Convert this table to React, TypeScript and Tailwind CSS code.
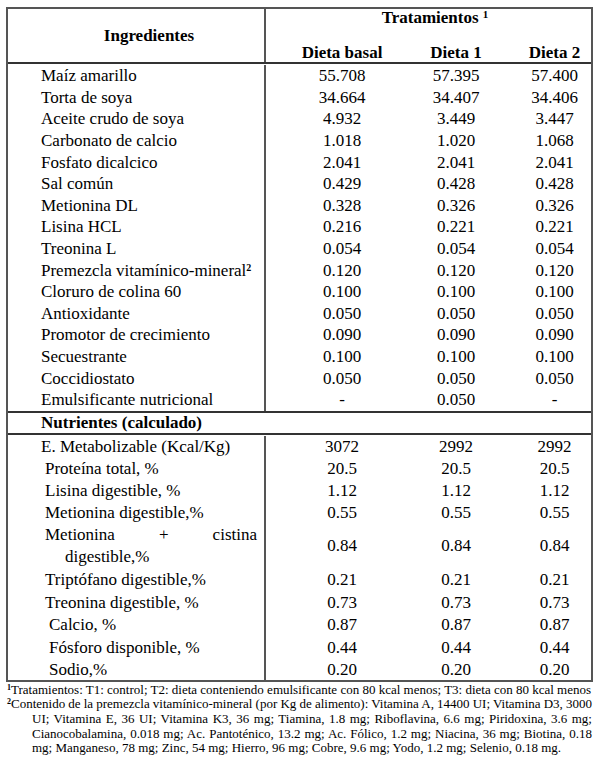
import React from "react";

type Row = { name: React.ReactNode; v: [string, string, string]; pl?: string; h?: string };

const ingredients: Row[] = [
  { name: "Maíz amarillo", v: ["55.708", "57.395", "57.400"] },
  { name: "Torta de soya", v: ["34.664", "34.407", "34.406"] },
  { name: "Aceite crudo de soya", v: ["4.932", "3.449", "3.447"] },
  { name: "Carbonato de calcio", v: ["1.018", "1.020", "1.068"] },
  { name: "Fosfato dicalcico", v: ["2.041", "2.041", "2.041"] },
  { name: "Sal común", v: ["0.429", "0.428", "0.428"] },
  { name: "Metionina DL", v: ["0.328", "0.326", "0.326"] },
  { name: "Lisina HCL", v: ["0.216", "0.221", "0.221"] },
  { name: "Treonina L", v: ["0.054", "0.054", "0.054"] },
  {
    name: (
      <>
        Premezcla vitamínico-mineral<sup className="font-bold text-[10px]">2</sup>
      </>
    ),
    v: ["0.120", "0.120", "0.120"],
  },
  { name: "Cloruro de colina 60", v: ["0.100", "0.100", "0.100"] },
  { name: "Antioxidante", v: ["0.050", "0.050", "0.050"] },
  { name: "Promotor de crecimiento", v: ["0.090", "0.090", "0.090"] },
  { name: "Secuestrante", v: ["0.100", "0.100", "0.100"] },
  { name: "Coccidiostato", v: ["0.050", "0.050", "0.050"] },
  { name: "Emulsificante nutricional", v: ["-", "0.050", "-"] },
];

const nutrients: Row[] = [
  { name: "E. Metabolizable (Kcal/Kg)", v: ["3072", "2992", "2992"], pl: "pl-[33px]" },
  { name: "Proteína total, %", v: ["20.5", "20.5", "20.5"], pl: "pl-[37px]" },
  { name: "Lisina digestible, %", v: ["1.12", "1.12", "1.12"], pl: "pl-[37px]" },
  { name: "Metionina digestible,%", v: ["0.55", "0.55", "0.55"], pl: "pl-[37px]" },
];

const nutrients2: Row[] = [
  { name: "Triptófano digestible,%", v: ["0.21", "0.21", "0.21"], pl: "pl-[37px]", h: "h-[23px]" },
  { name: "Treonina digestible, %", v: ["0.73", "0.73", "0.73"], pl: "pl-[37px]", h: "h-[23px]" },
  { name: "Calcio, %", v: ["0.87", "0.87", "0.87"], pl: "pl-[41px]", h: "h-[22px]" },
  { name: "Fósforo disponible, %", v: ["0.44", "0.44", "0.44"], pl: "pl-[41px]", h: "h-[23px]" },
  { name: "Sodio,%", v: ["0.20", "0.20", "0.20"], pl: "pl-[41px]", h: "h-[21px]" },
];

function Nums({ v }: { v: [string, string, string] }) {
  return (
    <>
      <div className="flex items-center justify-center">{v[0]}</div>
      <div className="flex items-center justify-center">{v[1]}</div>
      <div className="flex items-center justify-center pl-[24px]">{v[2]}</div>
    </>
  );
}

function DataRow({ r, h }: { r: Row; h: string }) {
  return (
    <div className={`grid grid-cols-[258px_152px_76px_97px] ${r.h ?? h}`}>
      <div className={`flex items-center border-r-2 border-[#555] whitespace-nowrap ${r.pl ?? "pl-[33px]"}`}>
        <span>{r.name}</span>
      </div>
      <Nums v={r.v} />
    </div>
  );
}

export default function App() {
  return (
    <div className="w-[600px] h-[766px] bg-white text-black font-['Liberation_Serif',serif] text-[17px] leading-none pt-[7px] pl-[6px]">
      <div className="w-[587px] border-2 border-[#555]">
        {/* header */}
        <div className="grid grid-cols-[258px_325px] h-[55px] border-b-2 border-[#333]">
          <div className="flex items-center justify-center pl-[26px] border-r-2 border-[#555] font-bold">
            Ingredientes
          </div>
          <div className="flex flex-col font-bold">
            <div className="flex justify-center pl-[13px] h-[35px]">
              <span>
                Tratamientos <sup className="text-[11px]">1</sup>
              </span>
            </div>
            <div className="grid grid-cols-[152px_76px_97px]">
              <div className="flex justify-center">Dieta basal</div>
              <div className="flex justify-center">Dieta 1</div>
              <div className="flex justify-center pl-[24px]">Dieta 2</div>
            </div>
          </div>
        </div>
        {/* ingredient rows */}
        <div className="pt-[1px]">
          {ingredients.map((r, i) => (
            <DataRow key={i} r={r} h="h-[21.6px]" />
          ))}
        </div>
        {/* section */}
        <div className="h-[24px] border-y-2 border-[#333] flex items-center pl-[33px] font-bold">
          Nutrientes (calculado)
        </div>
        <div className="pt-[1px]">
          {nutrients.map((r, i) => (
            <DataRow key={i} r={r} h="h-[22px]" />
          ))}
          <div className="grid grid-cols-[258px_152px_76px_97px] h-[44px]">
            <div className="flex items-center border-r-2 border-[#555] pl-[37px] pr-[7px]">
              <div className="text-justify [text-align-last:left] pl-[20px] -indent-[20px] leading-[22px] w-full">
                Metionina + cistina digestible,%
              </div>
            </div>
            <Nums v={["0.84", "0.84", "0.84"]} />
          </div>
          {nutrients2.map((r, i) => (
            <DataRow key={i} r={r} h="h-[22px]" />
          ))}
        </div>
      </div>
      <div className="w-[585px] ml-[1px] text-[13px] leading-[14.7px] pt-[1px]">
        <div className="whitespace-nowrap">
          <sup className="font-bold text-[8px]">1</sup>Tratamientos: T1: control; T2: dieta conteniendo emulsificante con 80 kcal menos; T3: dieta con 80 kcal menos
        </div>
        <div className="whitespace-nowrap [text-align-last:justify] [word-spacing:-2px]">
          <sup className="font-bold text-[8px]">2</sup>Contenido de la premezcla vitamínico-mineral (por Kg de alimento): Vitamina A, 14400 UI; Vitamina D3, 3000
        </div>
        <div className="pl-[25px] whitespace-nowrap [text-align-last:justify] [word-spacing:-1px]">
          UI; Vitamina E, 36 UI; Vitamina K3, 36 mg; Tiamina, 1.8 mg; Riboflavina, 6.6 mg; Piridoxina, 3.6 mg;
        </div>
        <div className="pl-[25px] whitespace-nowrap [text-align-last:justify] [word-spacing:-1px]">
          Cianocobalamina, 0.018 mg; Ac. Pantoténico, 13.2 mg; Ac. Fólico, 1.2 mg; Niacina, 36 mg; Biotina, 0.18
        </div>
        <div className="pl-[25px] whitespace-nowrap">
          mg; Manganeso, 78 mg; Zinc, 54 mg; Hierro, 96 mg; Cobre, 9.6 mg; Yodo, 1.2 mg; Selenio, 0.18 mg.
        </div>
      </div>
    </div>
  );
}
